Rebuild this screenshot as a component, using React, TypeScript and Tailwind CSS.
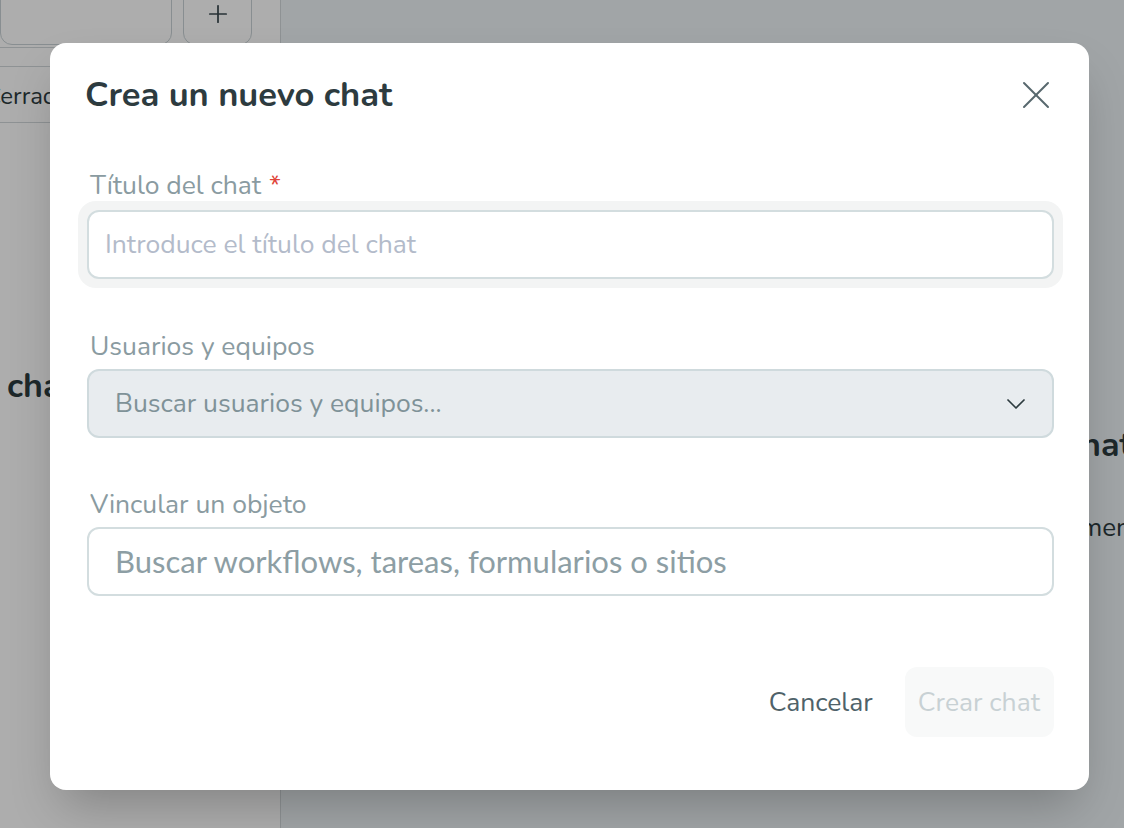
import { ChevronDown, Plus, X } from "lucide-react";

const font = { fontFamily: "Nunito, 'Open Sans', 'Noto Sans', sans-serif" };

const Backdrop = () => {
  return (
    <div className="flex h-[828px] w-full overflow-hidden">
      <aside className="flex w-[281px] shrink-0 flex-col border-r border-[#d2d8db] bg-white">
        <div className="flex h-[48px] items-end gap-[11px] border-b border-[#d2d8db] pb-[2px]">
          <div className="h-[56px] w-[172px] -mt-4 rounded-b-xl border border-[#c9d2d6]" />
          <div className="flex h-[56px] w-[69px] items-end justify-center rounded-b-xl border border-[#c9d2d6] pb-[16px] text-[#3b4a50]">
            <Plus className="h-7 w-7" strokeWidth={1.5} />
          </div>
        </div>
        <div className="mt-[18px] flex h-[57px] items-center border-y border-[#d2d8db] pt-[3px]">
          <span className="-ml-[15px] text-[24px] text-[#2d3b3f]">Cerrados</span>
        </div>
        <div className="mt-[238px] pl-[7px] text-[34px] font-bold text-[#2d3b3f]">chats</div>
      </aside>
      <main className="flex-1 bg-[#eef3f7] text-[#2d3b3f]">
        <div className="ml-[784px] mt-[422px] whitespace-nowrap text-[34px] font-bold leading-[46px]">
          chats
        </div>
        <div className="ml-[799px] mt-[43px] whitespace-nowrap text-[26px] leading-[34px]">
          mensajes
        </div>
      </main>
    </div>
  );
};

const Field = ({ label, required, children }: { label: string; required?: boolean; children: React.ReactNode }) => (
  <div className="flex flex-col">
    <label className="pl-[3px] text-[26.5px] leading-[30px] text-[#8a9ba1]">
      {label}
      {required && <span className="ml-[8px] text-[#e0453a]">*</span>}
    </label>
    {children}
  </div>
);

export default function App() {
  return (
    <div className="relative h-[828px] w-[1124px] overflow-hidden" style={font}>
      <Backdrop />
      <div className="absolute inset-0 bg-black/[0.32] pl-[50px] pt-[43px]">
        <div className="flex h-[747px] w-[1039px] flex-col rounded-2xl bg-white pb-[53px] pl-[37px] pr-[35px] pt-[34px] shadow-2xl">
          <div className="flex h-[36px] items-center justify-between">
            <h2 className="-ml-[2px] text-[34.5px] font-bold leading-[36px] text-[#2d3b3f]">Crea un nuevo chat</h2>
            <X className="-mr-[6px] h-12 w-12 text-[#58686e]" strokeWidth={1} />
          </div>

          <div className="mt-[57px]">
            <Field label="Título del chat" required>
              <div className="-mx-[9px] mt-[1px] rounded-[18px] bg-[#f3f4f4] p-[9px]">
                <div className="flex h-[69px] items-center rounded-xl border-2 border-[#d3dddf] bg-white px-[16px] pt-[1px] text-[26.5px] text-[#b3bbca]">
                  Introduce el título del chat
                </div>
              </div>
            </Field>
          </div>

          <div className="mt-[43px]">
            <Field label="Usuarios y equipos">
              <div className="mt-[8px] flex h-[69px] items-center justify-between rounded-xl border-2 border-[#cfdadd] bg-[#e8ecef] pl-[26px] pr-[20px] text-[26.5px] text-[#7f9298]">
                <span>Buscar usuarios y equipos...</span>
                <ChevronDown className="h-8 w-8 text-[#2d3b3f]" strokeWidth={1.3} />
              </div>
            </Field>
          </div>

          <div className="mt-[51px]">
            <Field label="Vincular un objeto">
              <div
                className="mt-[8px] flex h-[69px] items-center rounded-xl border-2 border-[#d3dddf] bg-white pl-[26px] text-[31px] text-[#8d9ea4]"
                style={{ fontFamily: "Lato, sans-serif" }}
              >
                Buscar workflows, tareas, formularios o sitios
              </div>
            </Field>
          </div>

          <div className="mt-auto flex items-center justify-end gap-[32px]">
            <button className="pt-[1px] text-[26.5px] text-[#4f6269]">Cancelar</button>
            <button className="flex h-[70px] items-center rounded-xl bg-[#f8f9f9] pl-[13px] pr-[14px] pt-[1px] text-[26.5px] text-[#c8d1d4]">
              Crear chat
            </button>
          </div>
        </div>
      </div>
    </div>
  );
}
